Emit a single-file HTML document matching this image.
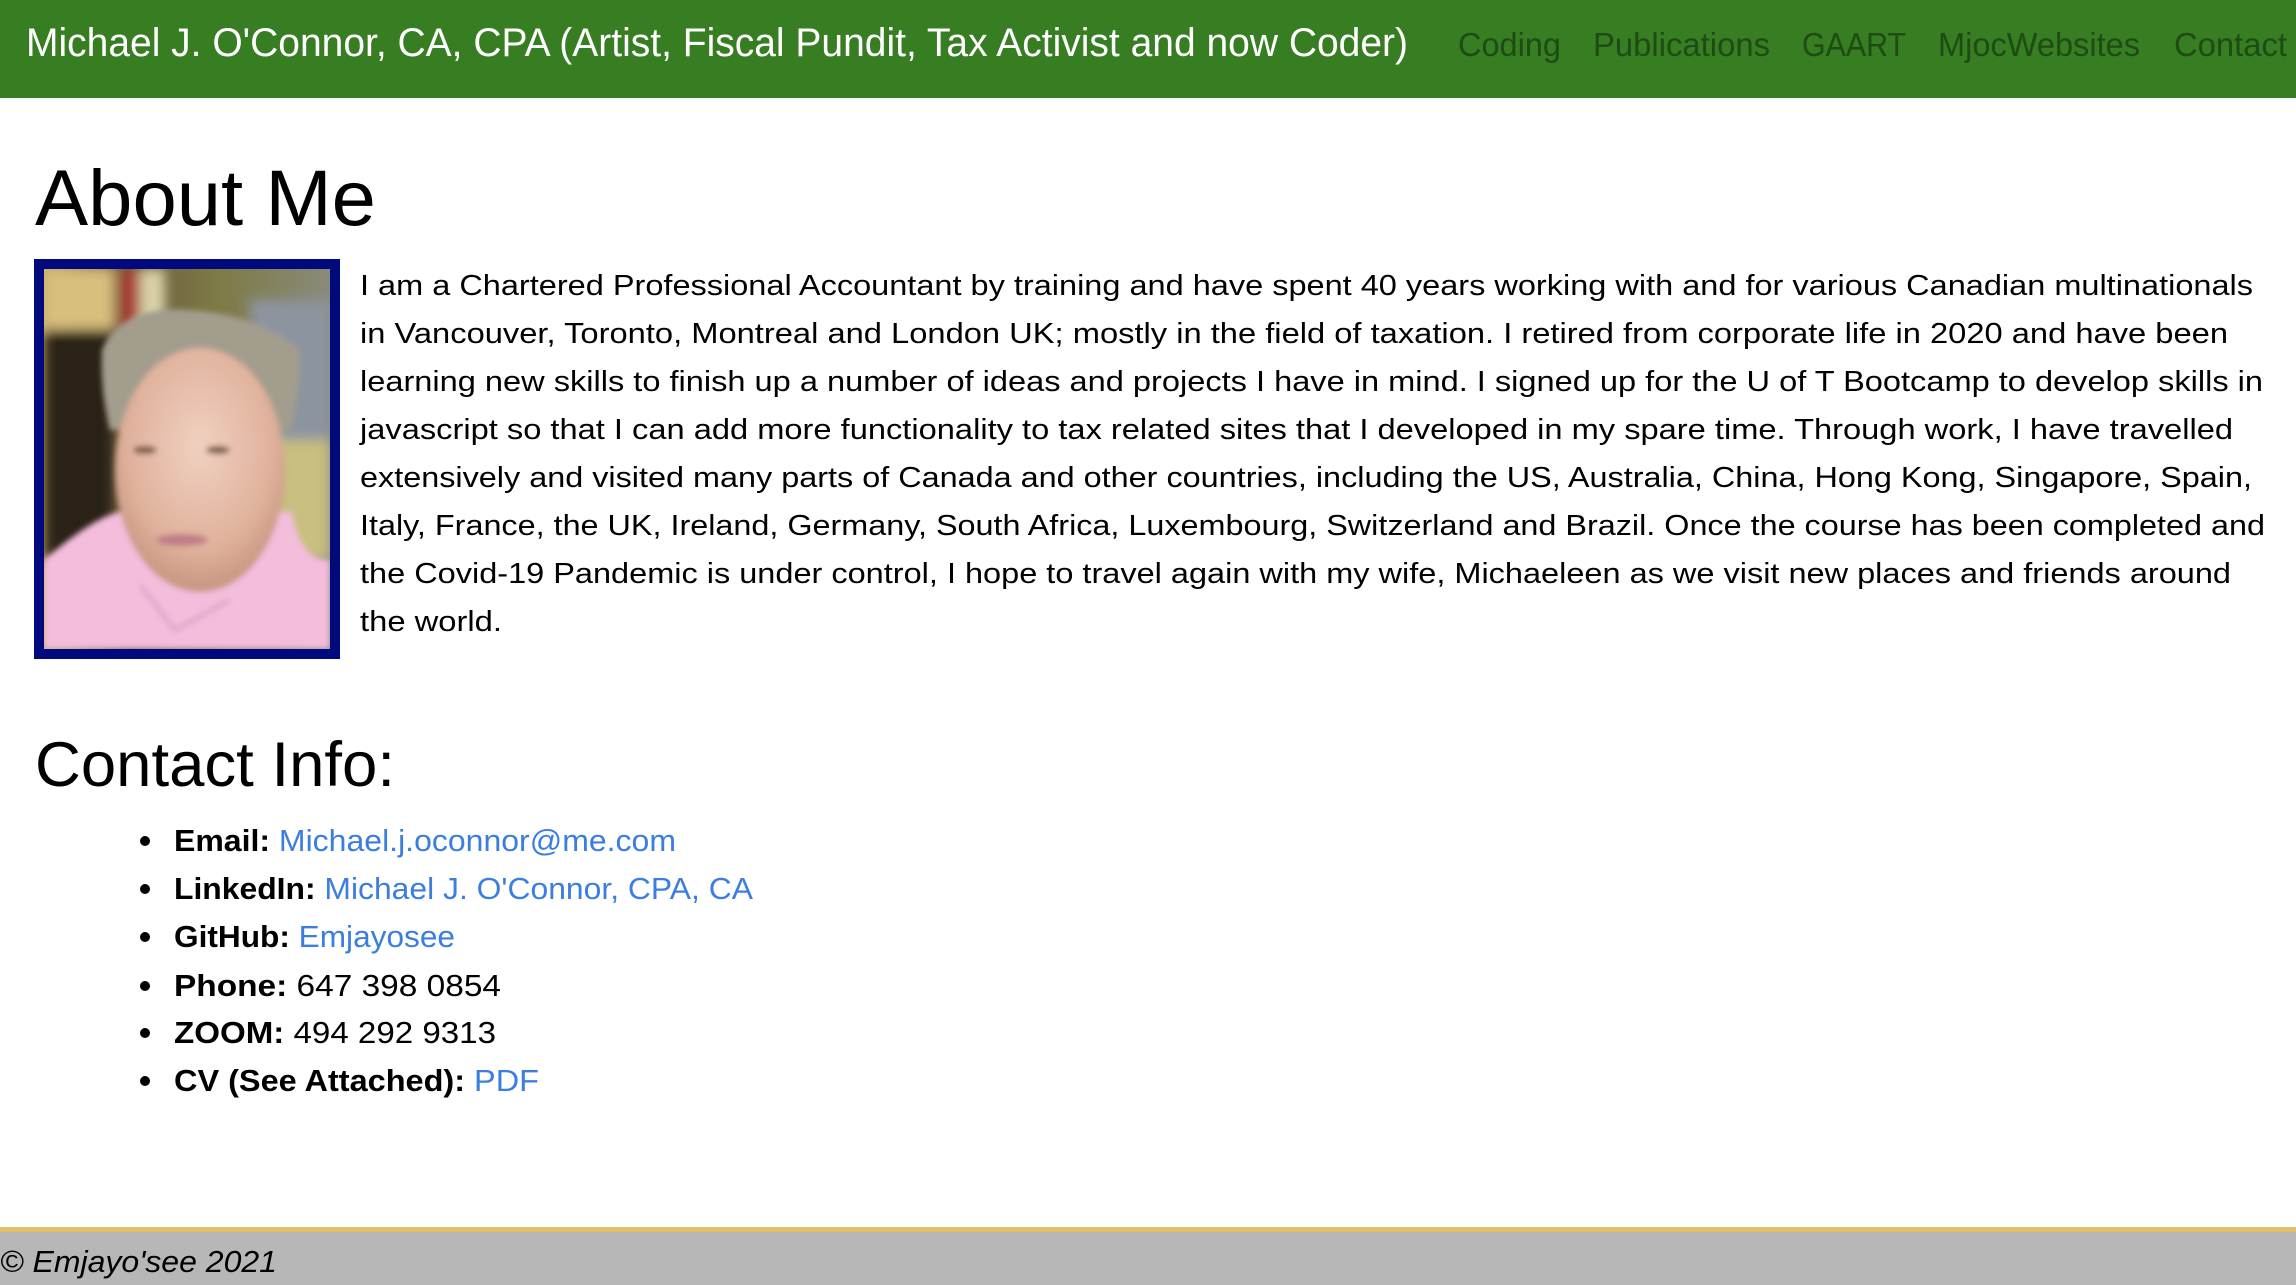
<!DOCTYPE html>
<html><head><meta charset="utf-8"><style>
html,body{margin:0;padding:0;width:2296px;height:1285px;overflow:hidden;background:#fff}
svg{display:block}
text{font-family:"Liberation Sans",Arial,sans-serif}
</style></head><body>
<svg width="2296" height="1285" viewBox="0 0 2296 1285" xmlns="http://www.w3.org/2000/svg">
<defs>
<filter id="bl" x="-20%" y="-20%" width="140%" height="140%"><feGaussianBlur stdDeviation="6"/></filter>
<filter id="bl2"><feGaussianBlur stdDeviation="3"/></filter>
<radialGradient id="face" cx="0.5" cy="0.4" r="0.6"><stop offset="0" stop-color="#f0d0c0"/><stop offset="0.7" stop-color="#e0b29c"/><stop offset="1" stop-color="#c8957f"/></radialGradient>
<linearGradient id="bg" x1="0" y1="0" x2="1" y2="0"><stop offset="0" stop-color="#c9ab6a"/><stop offset="0.3" stop-color="#6b5a3c"/><stop offset="0.6" stop-color="#7d7a45"/><stop offset="1" stop-color="#8a8a7a"/></linearGradient>
<clipPath id="pc"><rect x="44" y="269" width="286" height="380"/></clipPath>
</defs>
<rect x="0" y="0" width="2296" height="98" fill="#377d22"/>
<text x="26" y="56" font-size="40" fill="#fff" textLength="1382" lengthAdjust="spacingAndGlyphs">Michael J. O'Connor, CA, CPA (Artist, Fiscal Pundit, Tax Activist and now Coder)</text>
<g font-size="33" fill="#1f4b14">
<text x="1458" y="56" textLength="103" lengthAdjust="spacingAndGlyphs">Coding</text>
<text x="1593" y="56" textLength="177" lengthAdjust="spacingAndGlyphs">Publications</text>
<text x="1802" y="56" textLength="104" lengthAdjust="spacingAndGlyphs">GAART</text>
<text x="1938" y="56" textLength="202" lengthAdjust="spacingAndGlyphs">MjocWebsites</text>
<text x="2174" y="56" textLength="113" lengthAdjust="spacingAndGlyphs">Contact</text>
</g>
<text x="35" y="225" font-size="79" fill="#000" textLength="341" lengthAdjust="spacingAndGlyphs">About Me</text>
<rect x="34" y="259" width="306" height="400" fill="#000a7c"/>
<g clip-path="url(#pc)">
<rect x="44" y="269" width="286" height="380" fill="url(#bg)"/>
<g filter="url(#bl)">
<rect x="44" y="269" width="70" height="60" fill="#d8bf7e"/>
<rect x="44" y="330" width="70" height="230" fill="#2a2018"/>
<rect x="120" y="269" width="20" height="80" fill="#a83a30"/>
<rect x="140" y="269" width="25" height="80" fill="#d9d2a8"/>
<rect x="250" y="300" width="80" height="200" fill="#8c94a0"/>
<rect x="250" y="440" width="80" height="120" fill="#c8bf80"/>
</g>
<g filter="url(#bl2)">
<path d="M102 350 Q120 305 190 310 Q260 315 300 350 Q300 400 290 430 L110 430 Q100 390 102 350Z" fill="#a39d8e"/>
<path d="M44 560 Q90 520 118 512 L292 512 Q300 560 330 560 L330 649 L44 649 Z" fill="#f3bddb"/>
<ellipse cx="200" cy="470" rx="85" ry="122" fill="url(#face)"/>
<path d="M140 585 L175 630 L230 600" fill="none" stroke="#dfa3c6" stroke-width="4"/>
<ellipse cx="145" cy="450" rx="12" ry="4" fill="#7a5a44"/>
<ellipse cx="218" cy="450" rx="12" ry="4" fill="#7a5a44"/>
<ellipse cx="182" cy="540" rx="26" ry="6" fill="#c07c86"/>
</g>
</g>
<g font-size="29" fill="#000">
<text x="360" y="295" textLength="1893" lengthAdjust="spacingAndGlyphs">I am a Chartered Professional Accountant by training and have spent 40 years working with and for various Canadian multinationals</text>
<text x="360" y="343" textLength="1868" lengthAdjust="spacingAndGlyphs">in Vancouver, Toronto, Montreal and London UK; mostly in the field of taxation. I retired from corporate life in 2020 and have been</text>
<text x="360" y="391" textLength="1903" lengthAdjust="spacingAndGlyphs">learning new skills to finish up a number of ideas and projects I have in mind. I signed up for the U of T Bootcamp to develop skills in</text>
<text x="360" y="439" textLength="1873" lengthAdjust="spacingAndGlyphs">javascript so that I can add more functionality to tax related sites that I developed in my spare time. Through work, I have travelled</text>
<text x="360" y="487" textLength="1892" lengthAdjust="spacingAndGlyphs">extensively and visited many parts of Canada and other countries, including the US, Australia, China, Hong Kong, Singapore, Spain,</text>
<text x="360" y="535" textLength="1905" lengthAdjust="spacingAndGlyphs">Italy, France, the UK, Ireland, Germany, South Africa, Luxembourg, Switzerland and Brazil. Once the course has been completed and</text>
<text x="360" y="583" textLength="1871" lengthAdjust="spacingAndGlyphs">the Covid-19 Pandemic is under control, I hope to travel again with my wife, Michaeleen as we visit new places and friends around</text>
<text x="360" y="631" textLength="142" lengthAdjust="spacingAndGlyphs">the world.</text>
</g>
<text x="35" y="786" font-size="63" fill="#000" textLength="360" lengthAdjust="spacingAndGlyphs">Contact Info:</text>
<g font-size="31" fill="#000">
<circle cx="145" cy="841" r="5"/><circle cx="145" cy="889" r="5"/><circle cx="145" cy="937" r="5"/>
<circle cx="145" cy="986" r="5"/><circle cx="145" cy="1033" r="5"/><circle cx="145" cy="1081" r="5"/>
<text x="174" y="851" textLength="502" lengthAdjust="spacingAndGlyphs"><tspan font-weight="bold">Email: </tspan><tspan fill="#3b7ee0">Michael.j.oconnor@me.com</tspan></text>
<text x="174" y="899" textLength="579" lengthAdjust="spacingAndGlyphs"><tspan font-weight="bold">LinkedIn: </tspan><tspan fill="#3b7ee0">Michael J. O'Connor, CPA, CA</tspan></text>
<text x="174" y="947" textLength="281" lengthAdjust="spacingAndGlyphs"><tspan font-weight="bold">GitHub: </tspan><tspan fill="#3b7ee0">Emjayosee</tspan></text>
<text x="174" y="996" textLength="327" lengthAdjust="spacingAndGlyphs"><tspan font-weight="bold">Phone: </tspan>647 398 0854</text>
<text x="174" y="1043" textLength="322" lengthAdjust="spacingAndGlyphs"><tspan font-weight="bold">ZOOM: </tspan>494 292 9313</text>
<text x="174" y="1091" textLength="365" lengthAdjust="spacingAndGlyphs"><tspan font-weight="bold">CV (See Attached): </tspan><tspan fill="#3b7ee0">PDF</tspan></text>
</g>
<rect x="0" y="1227" width="2296" height="5" fill="#e2c06b"/>
<rect x="0" y="1232" width="2296" height="53" fill="#b7b7b7"/>
<text x="0" y="1272" font-size="31" font-style="italic" fill="#000" textLength="277" lengthAdjust="spacingAndGlyphs">© Emjayo'see 2021</text>
</svg>
</body></html>
